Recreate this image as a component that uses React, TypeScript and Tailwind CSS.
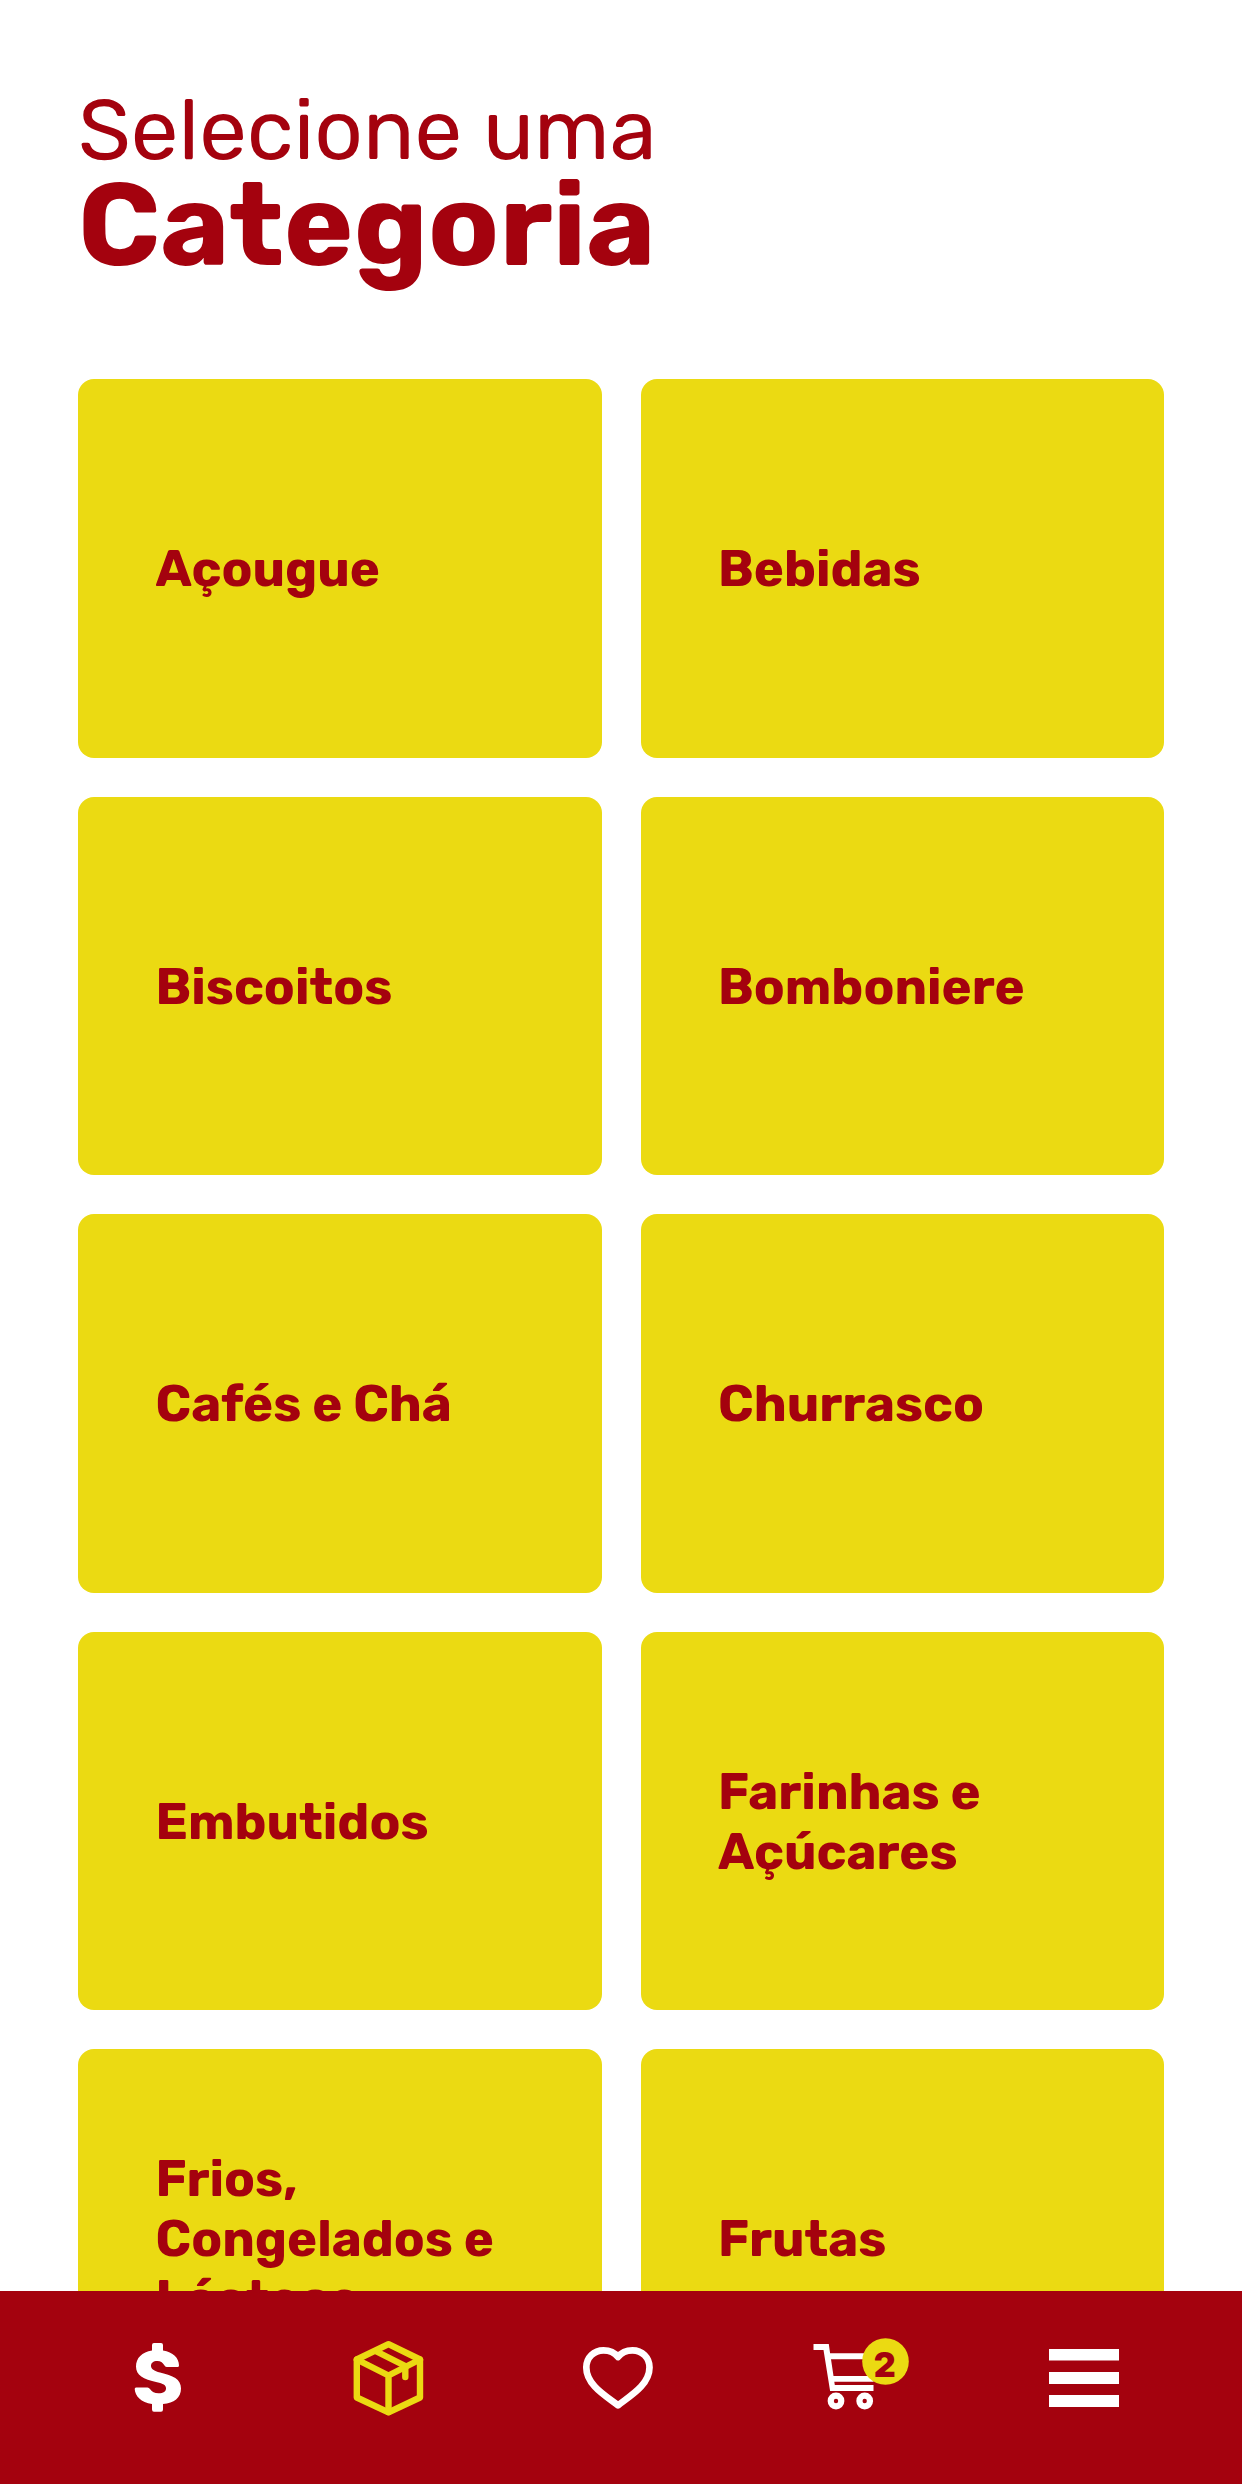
const categories = [
  'Açougue',
  'Bebidas',
  'Biscoitos',
  'Bomboniere',
  'Cafés e Chá',
  'Churrasco',
  'Embutidos',
  'Farinhas e Açúcares',
  'Frios, Congelados e Lácteos',
  'Frutas',
]

function DollarIcon() {
  return (
    <svg viewBox="23 28 70 80" className="w-[70px] h-20 text-white" fill="currentColor">
      <path d="M79 55.5Q79 57 77.500 57H67Q65.500 57 64.500 55.500C62.500 52.300 60.500 51 57.500 51C53 51 51 53 51 56C51 59 54 61 60 62.500C73 65.500 81 69 81 78.500C81 88 74 93 63 94V99.500Q63 101.800 61 101.800H54Q52 101.800 52 99.500V94C41 92.500 35 86 34.700 79Q34.700 77.500 36 77.500H47.500Q49 77.500 50.200 79.200C52 82 54.500 83.300 58.500 83.300C63.500 83.300 66 81.500 66 78.500C66 75 63 73.500 57 72.200C43 69.500 36 65 36 56.500C36 48 42 42 52 40.500V35Q52 33 54 33H61Q63 33 63 35V40.500C73 42 79 48 79 55.500Z" />
    </svg>
  )
}

function BoxIcon() {
  return (
    <svg
      viewBox="34.5 28 70 80"
      className="w-[70px] h-20 overflow-visible text-[#ebda12]"
      fill="none"
      stroke="currentColor"
      strokeWidth="6.4"
      strokeLinecap="round"
      strokeLinejoin="round"
    >
      <path d="M68 34.200L99.500 49.500V87.500L68 102.300L36.300 87.500V49.500Z" />
      <path d="M36.300 49.500L68 65.500L99.500 49.500M68 65.500V102" />
      <path d="M56 41.500L84.800 56V67" />
    </svg>
  )
}

function HeartIcon() {
  return (
    <svg
      viewBox="26 28 70 80"
      className="w-[70px] h-20 overflow-visible text-white"
      fill="none"
      stroke="currentColor"
      strokeWidth="6.7"
      strokeLinejoin="round"
    >
      <path d="M58 95.300C46 86 26.300 75 26.300 57.500C26.300 47.500 34 40.300 43.500 40.300C50 40.300 55 43 58 47C61 43 66 40.300 72.500 40.300C82 40.300 89.500 47.500 89.500 57.500C89.500 75 70 86 58 95.300Z" />
    </svg>
  )
}

function CartIcon({ count }: { count: number }) {
  return (
    <svg viewBox="27.5 28 70 80" className="w-[70px] h-20 overflow-visible" fill="none">
      <g fill="#fff">
        <path d="M23 34H38.300L39.600 43.300H80V49.300H40.500L43 66H83V71.700H43.800L44.300 75H83V81H39.600L33 40H23Z" />
        <circle cx="45.500" cy="91" r="8.400" />
        <circle cx="74.200" cy="91" r="8.400" />
      </g>
      <circle cx="45.500" cy="91" r="2.200" fill="#a4020e" />
      <circle cx="74.200" cy="91" r="2.200" fill="#a4020e" />
      <circle cx="95" cy="51.500" r="23.300" fill="#ebda12" />
      <text
        x="94.300"
        y="66.800"
        textAnchor="middle"
        fill="#a4020e"
        className="font-[Inter,sans-serif] text-[34px] font-black"
      >
        {count}
      </text>
    </svg>
  )
}

function MenuIcon() {
  return (
    <svg viewBox="19 28 70 80" className="w-[70px] h-20" fill="#fff">
      <rect x="19" y="39" width="70" height="11.500" />
      <rect x="19" y="62" width="70" height="12" />
      <rect x="19" y="85" width="70" height="12" />
    </svg>
  )
}

export default function App() {
  return (
    <div className="h-[2484px] flex flex-col overflow-hidden bg-white text-[#a4020e] font-[Rubik,Inter,sans-serif]">
      <main className="h-[2291px] shrink-0 overflow-hidden px-[78px]">
        <h1 className="h-[379px] pt-[86px] whitespace-nowrap">
          <span className="block text-[85px] leading-[88px] font-normal">Selecione uma</span>
          <span className="block text-[117.3px] leading-[101px] font-bold">Categoria</span>
        </h1>

        <div className="grid grid-cols-2 gap-[39px] auto-rows-[378.5px]">
          {categories.map((name) => (
            <div key={name} className="flex items-center rounded-2xl bg-[#ebda12] px-[77.5px] pt-0.5">
              <span className="text-[50.8px] leading-[60px] font-bold">{name}</span>
            </div>
          ))}
        </div>
      </main>

      {/* Bottom nav */}
      <nav className="h-[193px] shrink-0 flex justify-between bg-[#a4020e] px-[123px] pt-[47px]">
        <DollarIcon />
        <BoxIcon />
        <HeartIcon />
        <CartIcon count={2} />
        <MenuIcon />
      </nav>
    </div>
  )
}
